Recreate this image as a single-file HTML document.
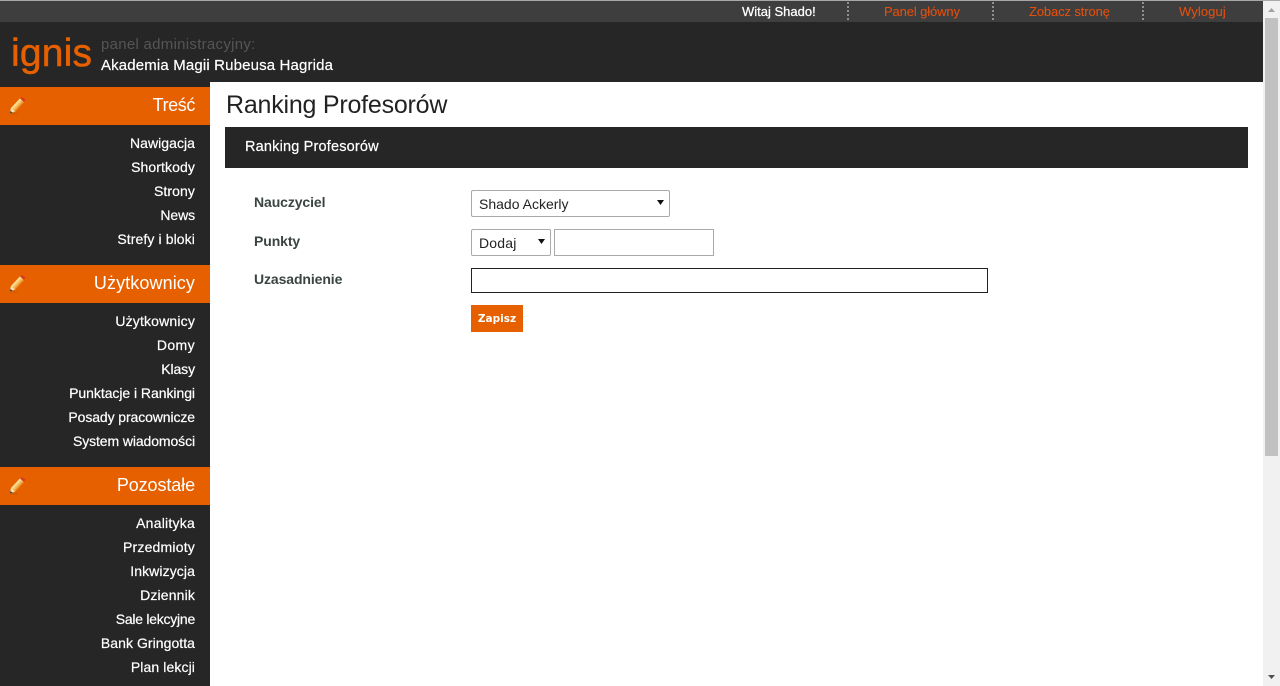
<!DOCTYPE html>
<html lang="pl"><head><meta charset="utf-8"><title>Ranking Profesorów</title>
<style>
html,body{margin:0;padding:0;width:1280px;height:686px;overflow:hidden;background:#fff;font-family:"Liberation Sans",sans-serif}
div,span,b{position:absolute;white-space:nowrap}
.s{left:0;width:210px;background:#262626}
.o{left:0;width:210px;height:38px;background:#e66000}
.h{right:1085px;color:#fff;font-size:18px;line-height:22px}
.m{right:1085px;color:#fff;font-size:14px;line-height:18px;-webkit-text-stroke:.2px #fff}
.t{font-size:13px;line-height:16px;top:4px;letter-spacing:-.12px;color:#e2500f;-webkit-text-stroke:.1px #e2500f}
.d{top:2px;width:0;height:18px;border-left:2px dotted #8f8f8f}
.l{left:254px;font-size:14px;font-weight:bold;color:#3a4540;line-height:18px;letter-spacing:-.1px}
.f{box-sizing:border-box;background:#fff;border:1px solid #aaa}
.v{color:#222;font-size:14px;line-height:18px}
svg{position:absolute;left:9px}
</style></head><body>
<svg width="0" height="0" style="left:0;top:0"><defs><g id="pencil"><path d="M1 16.500H9V17.300H1Z" fill="#a85a10" opacity=".7"/><path d="M1 16 L2 11 L11 1.400 L15 5 L6 14.600Z" fill="#f7bd5c"/><path d="M2 11 L11 1.400 L12.500 2.800 L3.500 12.400Z" fill="#fbdc92"/><path d="M6 14.600 L15 5 L14 4 L5 13.600Z" fill="#e8912c"/><path d="M11 1.400 L13 0.200 L16.500 2.500 L15 5Z" fill="#d63a22"/><path d="M1 16 L2 11 L6 14.600Z" fill="#f8e2b8"/><path d="M1 16.300 L1.500 14 L3.500 15.500Z" fill="#333"/></g></defs></svg>
<div style="left:0;top:0;width:1280px;height:1px;background:#a8a8a8"></div>
<div style="left:0;top:1px;width:1263px;height:21px;background:#3e3e3e"></div>
<div style="left:0;top:22px;width:1263px;height:60px;background:#262626"></div>
<span class="t" style="left:742px;color:#fff;letter-spacing:0;-webkit-text-stroke:.25px #fff">Witaj Shado!</span>
<div class="d" style="left:847px"></div><span class="t" style="left:884px">Panel główny</span>
<div class="d" style="left:992px"></div><span class="t" style="left:1029px">Zobacz stronę</span>
<div class="d" style="left:1142px"></div><span class="t" style="left:1179px;letter-spacing:.1px">Wyloguj</span>
<span style="left:11px;top:31px;font-size:39px;line-height:46px;color:#e66000;letter-spacing:.2px;-webkit-text-stroke:.5px #e66000">ignis</span>
<span style="left:101px;top:36px;font-size:15px;line-height:18px;color:#555;letter-spacing:.28px">panel administracyjny:</span>
<span style="left:101px;top:56px;font-size:15px;line-height:19px;color:#fff;letter-spacing:.15px;-webkit-text-stroke:.2px #fff">Akademia Magii Rubeusa Hagrida</span>

<div class="s" style="top:82px;height:604px"></div>
<div class="o" style="top:87px"></div><div class="o" style="top:265px"></div><div class="o" style="top:467px"></div>
<svg style="top:97px" width="17" height="18" viewBox="0 0 17 18"><use href="#pencil"/></svg>
<svg style="top:275px" width="17" height="18" viewBox="0 0 17 18"><use href="#pencil"/></svg>
<svg style="top:477px" width="17" height="18" viewBox="0 0 17 18"><use href="#pencil"/></svg>
<span class="h" style="top:94px;letter-spacing:-.4px">Treść</span>
<span class="m" style="top:134px;letter-spacing:.05px">Nawigacja</span>
<span class="m" style="top:158px;letter-spacing:.1px">Shortkody</span>
<span class="m" style="top:182px;letter-spacing:.1px">Strony</span>
<span class="m" style="top:206px;letter-spacing:-.1px">News</span>
<span class="m" style="top:230px;letter-spacing:.1px">Strefy i bloki</span>
<span class="h" style="top:272px;letter-spacing:.1px">Użytkownicy</span>
<span class="m" style="top:312px;letter-spacing:.17px">Użytkownicy</span>
<span class="m" style="top:336px;letter-spacing:.4px">Domy</span>
<span class="m" style="top:360px;letter-spacing:-.1px">Klasy</span>
<span class="m" style="top:384px;letter-spacing:-.05px">Punktacje i Rankingi</span>
<span class="m" style="top:408px;letter-spacing:-.1px">Posady pracownicze</span>
<span class="m" style="top:432px;letter-spacing:-.1px">System wiadomości</span>
<span class="h" style="top:474px;letter-spacing:-.1px">Pozostałe</span>
<span class="m" style="top:514px;letter-spacing:.23px">Analityka</span>
<span class="m" style="top:538px;letter-spacing:.2px">Przedmioty</span>
<span class="m" style="top:562px;letter-spacing:.1px">Inkwizycja</span>
<span class="m" style="top:586px;letter-spacing:.15px">Dziennik</span>
<span class="m" style="top:610px;letter-spacing:-.25px">Sale lekcyjne</span>
<span class="m" style="top:634px;letter-spacing:.05px">Bank Gringotta</span>
<span class="m" style="top:658px;letter-spacing:.1px">Plan lekcji</span>

<span style="left:226px;top:90px;font-size:25px;line-height:31px;color:#222;letter-spacing:-.22px">Ranking Profesorów</span>
<div style="left:225px;top:127px;width:1023px;height:41px;background:#262626"></div>
<span style="left:245px;top:138px;font-size:14.500px;line-height:18px;color:#fff;letter-spacing:.18px;-webkit-text-stroke:.2px #fff">Ranking Profesorów</span>

<span class="l" style="top:193px">Nauczyciel</span>
<span class="l" style="top:232px">Punkty</span>
<span class="l" style="top:270px">Uzasadnienie</span>

<div class="f" style="left:471px;top:190px;width:199px;height:27px;border-radius:2px"></div>
<span class="v" style="left:479px;top:195px">Shado Ackerly</span>
<svg style="left:657px;top:200px" width="7" height="5"><path d="M0 0H7L3.500 5Z" fill="#111"/></svg>
<div class="f" style="left:471px;top:229px;width:80px;height:27px;border-radius:2px"></div>
<span class="v" style="left:479px;top:234px;letter-spacing:.2px">Dodaj</span>
<svg style="left:538px;top:239px" width="7" height="5"><path d="M0 0H7L3.500 5Z" fill="#111"/></svg>
<div class="f" style="left:554px;top:229px;width:160px;height:27px"></div>
<div class="f" style="left:471px;top:268px;width:517px;height:25px;border-color:#222"></div>
<div style="left:471px;top:305px;width:52px;height:27px;background:#e66000"></div>
<span style="left:471px;top:311px;width:52px;text-align:center;color:#fff;font-family:'DejaVu Sans',sans-serif;font-weight:bold;font-size:10.500px;line-height:16px">Zapisz</span>

<div style="left:1263px;top:1px;width:17px;height:685px;background:#f1f1f1"></div>
<div style="left:1265px;top:18px;width:13px;height:438px;background:#c1c1c1"></div>
<svg style="left:1268px;top:8px" width="7" height="4"><path d="M3.500 0L7 4H0Z" fill="#a3a3a3"/></svg>
<svg style="left:1268px;top:675px" width="7" height="4"><path d="M0 0H7L3.500 4Z" fill="#505050"/></svg>
</body></html>
